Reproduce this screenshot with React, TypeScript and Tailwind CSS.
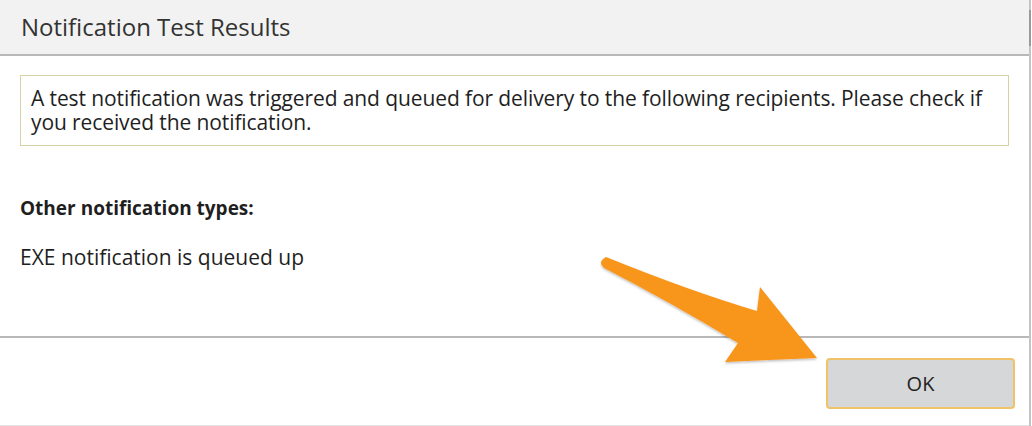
import React from 'react';

const font = { fontFamily: '"Open Sans", "Noto Sans", sans-serif' };

const Arrow = () => (
  <svg className="pointer-events-none absolute left-0 top-0" width={1032} height={426} viewBox="0 0 1032 426">
    <defs>
      <filter id="sh" x="-10%" y="-10%" width="120%" height="130%">
        <feDropShadow dx="0" dy="1.5" stdDeviation="1.2" floodColor="#000" floodOpacity="0.25" />
      </filter>
    </defs>
    <path
      d="M 606 257 Q 690 291 757 311 L 760 287 L 817 358 L 725 362 L 738 343 Q 670 302 604 268 Q 597 262 606 257 Z"
      fill="#f8961d"
      filter="url(#sh)"
    />
  </svg>
);

export default function App() {
  return (
    <div className="relative h-[426px] w-[1032px] overflow-hidden bg-white text-[#1f1f1f]" style={font}>
      <div className="flex h-[426px] w-[1031px] flex-col border-r-2 border-[#c4c4c4]">
        <div className="flex h-[56px] shrink-0 items-center border-b-2 border-[#b8b8b8] bg-[#f2f2f2] pl-[21px]">
          <h1 className="text-[24px] font-normal text-[#333]">Notification Test Results</h1>
        </div>

        <div className="flex h-[282px] shrink-0 flex-col border-b-2 border-[#b8b8b8] px-[20px] pt-[19px]">
          <div className="h-[71px] border border-[#d8d0a6] pl-[10px] pr-[6px] pt-[10px] text-[21px] leading-[24px] tracking-[-0.1px]">
            A test notification was triggered and queued for delivery to the following recipients. Please check if
            you received the notification.
          </div>
          <p className="mt-[50px] text-[19px] font-bold leading-[24px]">Other notification types:</p>
          <p className="mt-[25px] text-[21px] leading-[24px]">EXE notification is queued up</p>
        </div>

        <div className="flex flex-1 items-start justify-end border-b border-[#e4e4e4] pr-[14px] pt-[20px]">
          <button className="flex h-[51px] w-[189px] items-center justify-center rounded-[4px] border-2 border-[#f0c36a] bg-[#d6d7d9] text-[20px] text-[#222]">
            OK
          </button>
        </div>
      </div>
      <div className="absolute right-[1px] top-[10px] h-[36px] w-[2px] bg-[#9a9a9a]" />
      <Arrow />
    </div>
  );
}
